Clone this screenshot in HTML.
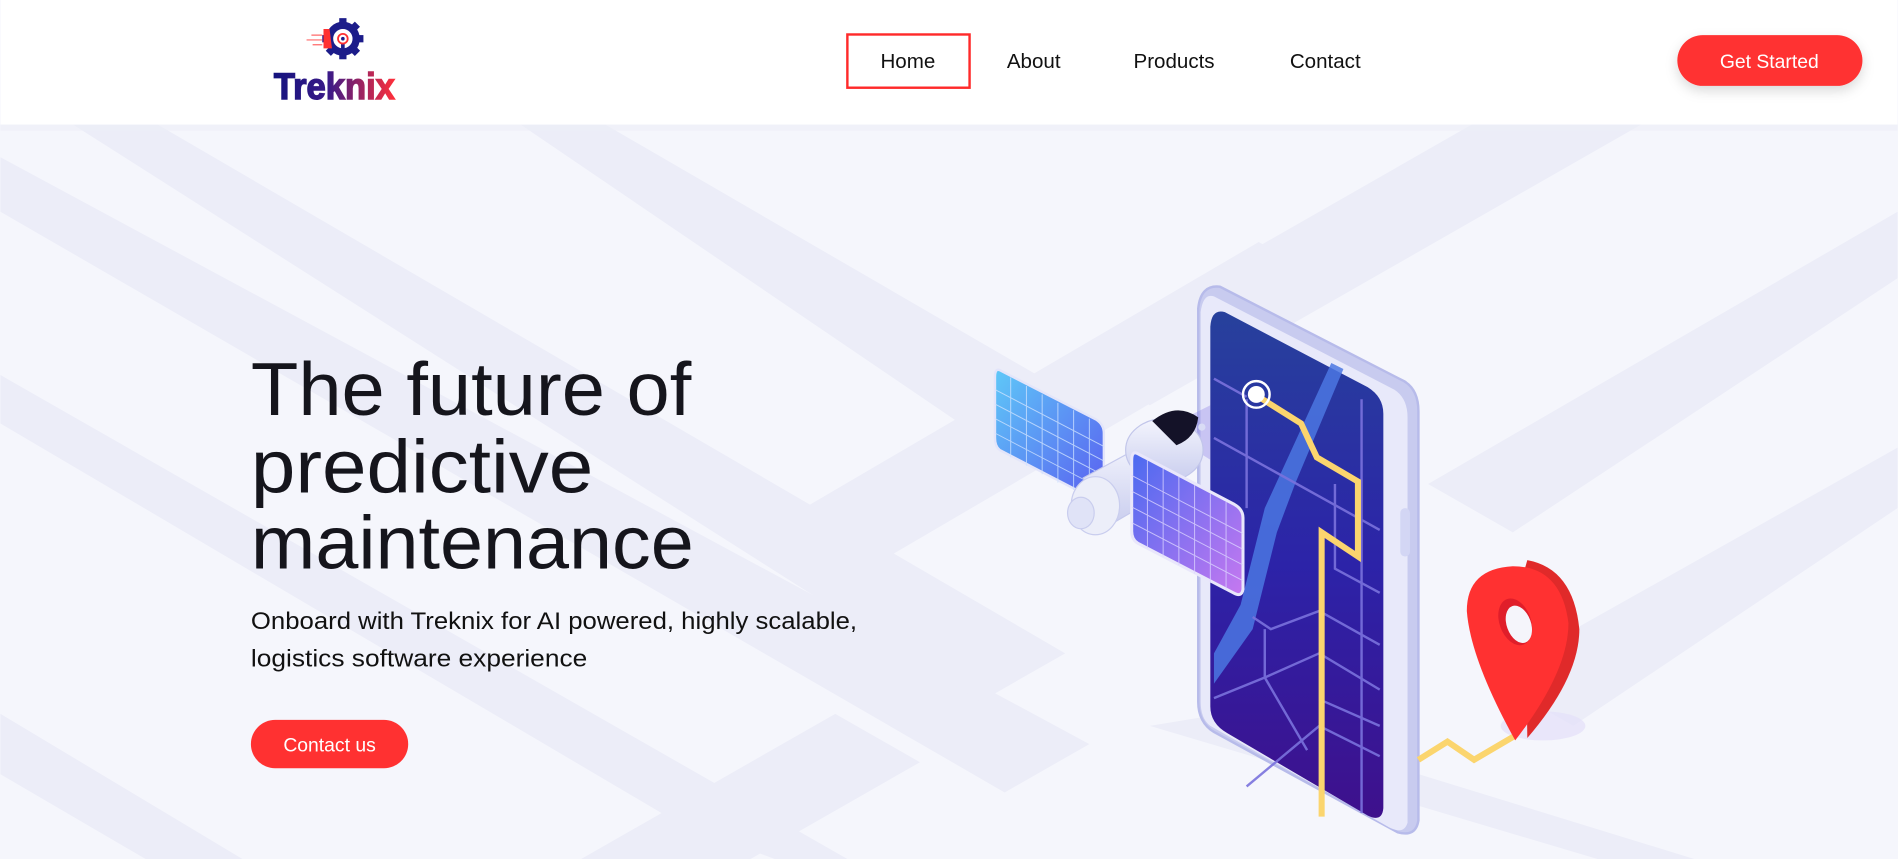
<!DOCTYPE html>
<html><head><meta charset="utf-8"><style>
html,body{margin:0;padding:0;width:1898px;height:859px;overflow:hidden;background:#f5f6fc}
svg{display:block}
text{font-family:"Liberation Sans",sans-serif}
</style></head><body>
<svg width="1898" height="859" viewBox="0 0 1568 710" xmlns="http://www.w3.org/2000/svg">
<defs>
<linearGradient id="scr" x1="0" y1="0" x2="0" y2="1"><stop offset="0" stop-color="#27419c"/><stop offset="0.5" stop-color="#2c23a8"/><stop offset="1" stop-color="#3e108c"/></linearGradient>
<linearGradient id="pan1" x1="0" y1="0" x2="1" y2="1"><stop offset="0" stop-color="#5ec8f8"/><stop offset="1" stop-color="#5a5ef0"/></linearGradient>
<linearGradient id="pan2" x1="0" y1="0" x2="1" y2="1"><stop offset="0" stop-color="#4a6af0"/><stop offset="1" stop-color="#c678f0"/></linearGradient>
<linearGradient id="logo" x1="0" y1="0" x2="1" y2="0"><stop offset="0" stop-color="#14137e"/><stop offset="0.45" stop-color="#3a1a88"/><stop offset="1" stop-color="#ff2f3a"/></linearGradient>
<linearGradient id="cyl" x1="0" y1="0" x2="0" y2="1"><stop offset="0" stop-color="#f4f5fd"/><stop offset="1" stop-color="#c9cdee"/></linearGradient>
<filter id="sh" x="-20%" y="-50%" width="140%" height="200%"><feDropShadow dx="0" dy="4" stdDeviation="5" flood-color="#000" flood-opacity="0.15"/></filter>
</defs>
<g fill="#ecedf8">
<polygon points="0,130 0,175 830,655 900,615"/>
<polygon points="60,103 130,103 880,540 810,580"/>
<polygon points="430,103 500,103 900,335 830,375"/>
<polygon points="630,440 1040,200 1110,240 700,480"/>
<polygon points="880,295 1300,55 1370,95 950,335"/>
<polygon points="0,300 0,350 560,680 640,710 700,710 0,310"/>
<polygon points="1180,400 1568,175 1568,230 1250,440"/>
<polygon points="0,590 0,640 120,710 200,710"/>
<polygon points="1230,560 1568,370 1568,420 1300,600"/>
<polygon points="950,600 1320,710 1400,710 1010,590"/>
<polygon points="480,710 690,590 760,630 620,710"/>
</g>
<rect x="0" y="0" width="1568" height="103" fill="#fff"/>
<rect x="0" y="103" width="1568" height="5" fill="#eceef7" opacity="0.6"/>
<g transform="translate(283,32)">
<circle r="11" fill="none" stroke="#1c1c8a" stroke-width="6"/>
<g fill="#1c1c8a"><rect x="-3" y="-17" width="6" height="6"/><rect x="-3" y="11" width="6" height="6"/><rect x="11" y="-3" width="6" height="6"/><rect x="-17" y="-3" width="6" height="6"/>
<rect x="-3" y="-17" width="6" height="6" transform="rotate(45)"/><rect x="-3" y="11" width="6" height="6" transform="rotate(45)"/><rect x="11" y="-3" width="6" height="6" transform="rotate(45)"/><rect x="-3" y="11" width="6" height="6" transform="rotate(-45)"/></g>
<rect x="-1.5" y="0" width="3" height="10" fill="#1c1c8a"/>
<circle r="4" fill="#fff" stroke="#ff3131" stroke-width="1.5"/><circle r="1.5" fill="#1c1c8a"/>
<path d="M-16,-8 L-11,-8 L-9,8 L-16,8 Z" fill="#ff3131"/>
<path d="M-26,-3 h9 M-30,1 h13 M-25,5 h8" stroke="#ff6a6a" stroke-width="1"/>
</g>
<text x="226" y="82" font-size="31" font-weight="700" fill="url(#logo)" stroke="url(#logo)" stroke-width="1.2" textLength="100" lengthAdjust="spacingAndGlyphs" font-family="Liberation Sans Narrow, Liberation Sans, sans-serif">Treknix</text>
<rect x="700" y="28.5" width="101" height="44" fill="none" stroke="#ff2a2a" stroke-width="2"/>
<g font-size="17" fill="#111" text-anchor="middle">
<text x="750" y="56">Home</text><text x="854" y="56">About</text><text x="970" y="56">Products</text><text x="1095" y="56">Contact</text>
</g>
<rect x="1386" y="29" width="153" height="42" rx="21" fill="#ff3131" filter="url(#sh)"/>
<text x="1462" y="56" font-size="16" fill="#fff" text-anchor="middle">Get Started</text>
<g font-size="62" fill="#15151c">
<text x="207" y="343" textLength="364" lengthAdjust="spacingAndGlyphs">The future of</text>
<text x="207" y="407" textLength="283" lengthAdjust="spacingAndGlyphs">predictive</text>
<text x="207" y="470" textLength="366" lengthAdjust="spacingAndGlyphs">maintenance</text>
</g>
<g font-size="20" fill="#111">
<text x="207" y="520" textLength="501" lengthAdjust="spacingAndGlyphs">Onboard with Treknix for AI powered, highly scalable,</text>
<text x="207" y="551" textLength="278" lengthAdjust="spacingAndGlyphs">logistics software experience</text>
</g>
<rect x="207" y="595" width="130" height="40" rx="20" fill="#ff3131"/>
<text x="272" y="621" font-size="16" fill="#fff" text-anchor="middle">Contact us</text>
<ellipse cx="1275" cy="600" rx="35" ry="12" fill="#e4e0fa" opacity="0.7"/>
<path d="M1008,237 L1160,315 Q1172,322 1172,340 L1172,678 Q1170,692 1155,688 L1003,605 Q990,597 990,580 L990,255 Q992,235 1008,237 Z" fill="#c8cbef" stroke="#b7bbea" stroke-width="2"/>
<path d="M1003,245 L1152,322 Q1163,329 1163,345 L1163,680 Q1160,690 1148,684 L1000,600 Q992,594 992,580 L992,258 Q994,242 1003,245 Z" fill="#e8e9fa"/>
<rect x="1157" y="420" width="8" height="40" rx="4" fill="#d3d6f4"/>
<path d="M1012,258 L1130,320 Q1143,328 1143,342 L1143,668 Q1142,680 1130,674 L1014,606 Q1000,598 1000,584 L1000,270 Q1001,255 1012,258 Z" fill="url(#scr)"/>
<path d="M1100,300 L1110,305 L1070,400 L1055,440 L1035,520 L1003,565 L1003,540 L1025,500 L1045,420 Z" fill="#4b77e2" opacity="0.85"/>
<g stroke="#7a72dd" stroke-width="2" fill="none" opacity="0.9">
<path d="M1003,313 L1030,328"/><path d="M1003,362 L1140,438"/><path d="M1030,330 L1030,420"/>
<path d="M1103,400 L1103,470 L1140,490"/><path d="M1125,330 L1125,672"/>
<path d="M1035,510 L1050,520 L1090,505 L1140,533"/><path d="M1003,577 L1045,560 L1090,540 L1140,570"/>
<path d="M1045,520 L1045,560 L1080,620"/><path d="M1030,650 L1090,600 L1140,625"/><path d="M1090,578 L1140,600"/>
</g>
<path d="M1040,328 L1075,350 L1088,378 L1122,398 L1122,460 L1092,440 L1092,675" stroke="#fbd56e" stroke-width="5" fill="none"/>
<circle cx="1038" cy="326" r="11" fill="none" stroke="#fff" stroke-width="2"/><circle cx="1038" cy="326" r="7" fill="#fff"/>
<path d="M1172,628 L1196,613 L1218,628 L1252,608" stroke="#fbd56e" stroke-width="5" fill="none"/>
<path d="M1262,463 Q1300,470 1305,520 Q1305,560 1262,610 L1260,470 Z" fill="#e02a2a"/>
<path d="M1250,468 Q1290,468 1296,515 Q1296,555 1252,612 Q1215,545 1212,505 Q1212,470 1250,468 Z" fill="#ff3131"/>
<ellipse cx="1252" cy="514" rx="13" ry="20" fill="#e01e2a" transform="rotate(-20 1252 514)"/>
<ellipse cx="1255" cy="516" rx="10" ry="16" fill="#f5f5fb" transform="rotate(-20 1255 516)"/>
<path d="M960,355 L1000,335 L1000,380 Z" fill="#8b82e6" opacity="0.35"/>
<path d="M826,306 L906,347 Q912,351 912,358 L912,410 Q911,416 905,413 L826,372 Q822,369 822,362 L822,312 Q822,304 826,306 Z" fill="url(#pan1)" stroke="#e3e5fa" stroke-width="2"/>
<g stroke="#cfe3ff" stroke-width="0.8" opacity="0.8">
<path d="M822,322 L912,369 M822,334 L912,381 M822,346 L912,393 M822,358 L912,405"/>
<path d="M835,312 L835,378 M848,319 L848,385 M861,326 L861,392 M874,333 L874,399 M887,339 L887,405 M900,346 L900,411"/>
</g>
<path d="M895,395 L950,365 L975,400 L915,435 Z" fill="url(#cyl)" stroke="#c5c9ec"/>
<ellipse cx="962" cy="372" rx="32" ry="26" fill="url(#cyl)" stroke="#c2c6ea"/>
<path d="M952,348 Q972,332 990,345 Q988,362 972,368 Z" fill="#141228"/>
<circle cx="993" cy="353" r="3" fill="#d9dcf5"/>
<ellipse cx="905" cy="418" rx="20" ry="24" fill="#eceef9" stroke="#c9cdee"/>
<ellipse cx="893" cy="424" rx="11" ry="13" fill="#e0e3f7" stroke="#c9cdee"/>
<path d="M940,375 L1020,417 Q1027,421 1027,428 L1027,487 Q1026,494 1019,490 L940,449 Q935,446 935,439 L935,381 Q935,372 940,375 Z" fill="url(#pan2)" stroke="#e9e7fb" stroke-width="2.5"/>
<g stroke="#dcd5ff" stroke-width="0.8" opacity="0.8">
<path d="M935,393 L1027,441 M935,406 L1027,454 M935,419 L1027,467 M935,432 L1027,480"/>
<path d="M948,380 L948,453 M961,387 L961,460 M974,394 L974,467 M987,401 L987,474 M1000,408 L1000,481 M1013,415 L1013,488"/>
</g>
</svg>
</body></html>
